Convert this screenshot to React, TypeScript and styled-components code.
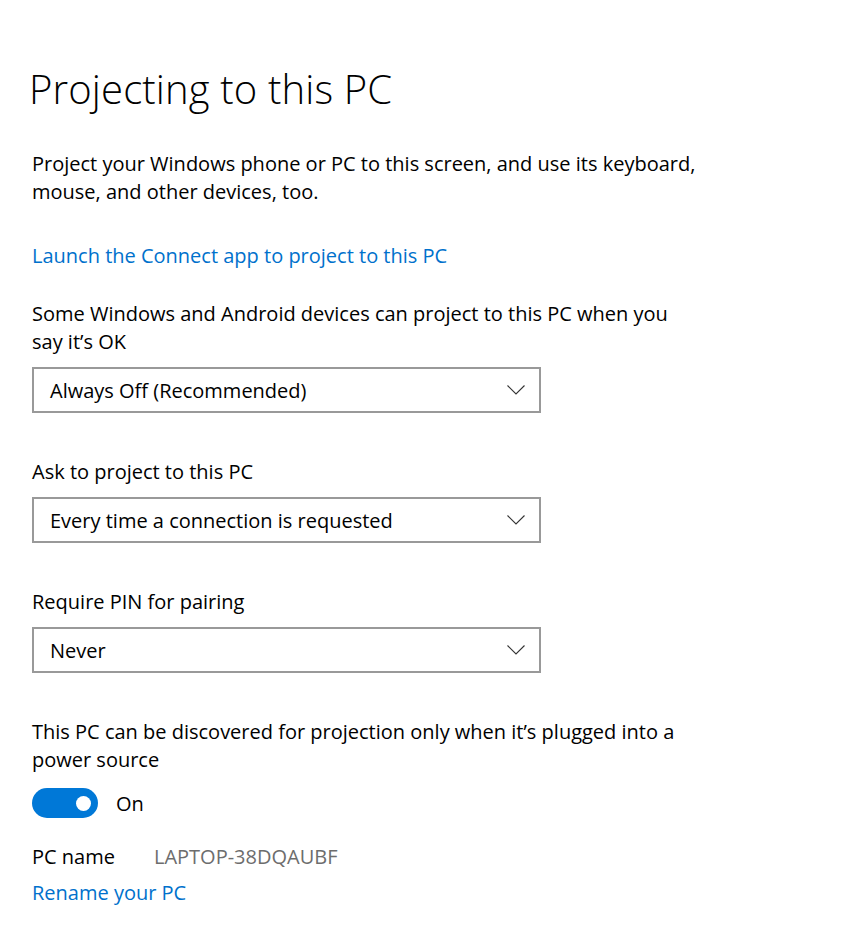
import React from "react";
import styled, { createGlobalStyle } from "styled-components";

const GlobalStyle = createGlobalStyle`
  html, body {
    margin: 0;
    padding: 0;
    background: #ffffff;
  }
  body {
    font-family: "Open Sans", "Noto Sans", "Liberation Sans", sans-serif;
    color: #000000;
  }
`;

const Page = styled.div`
  width: 850px;
  min-height: 930px;
  box-sizing: border-box;
  padding: 61px 0 0 32px;
  display: flex;
  flex-direction: column;
`;

const Title = styled.h1`
  margin: 0 0 0 -3px;
  font-size: 40px;
  font-weight: 300;
  line-height: 56px;
  letter-spacing: 0.15px;
`;

const Text = styled.p<{ $top: number }>`
  margin: ${(p) => p.$top}px 0 0 0;
  font-size: 20px;
  line-height: 28px;
`;

const Link = styled.a<{ $top: number }>`
  display: block;
  margin-top: ${(p) => p.$top}px;
  font-size: 20px;
  line-height: 28px;
  color: #0071cc;
  text-decoration: none;
  cursor: pointer;
`;

const Select = styled.div`
  margin-top: 11px;
  width: 509px;
  height: 46px;
  box-sizing: border-box;
  border: 2px solid #999999;
  display: flex;
  align-items: center;
  justify-content: space-between;
  padding: 0 14px 0 16px;
  font-size: 20px;
`;

const Chevron = () => (
  <svg width="18" height="10" viewBox="0 0 18 10">
    <path d="M0.5 0.5 L9 9 L17.5 0.5" fill="none" stroke="#333333" strokeWidth="1.1" />
  </svg>
);

const ToggleRow = styled.div`
  margin-top: 14px;
  display: flex;
  align-items: center;
  gap: 18px;
  font-size: 20px;
`;

const Toggle = styled.div<{ $on: boolean }>`
  width: 66px;
  height: 30px;
  box-sizing: border-box;
  border-radius: 15px;
  background: ${(p) => (p.$on ? "#0078d7" : "#ffffff")};
  display: flex;
  align-items: center;
  justify-content: ${(p) => (p.$on ? "flex-end" : "flex-start")};
  padding: 0 7px;

  &::after {
    content: "";
    width: 15px;
    height: 15px;
    border-radius: 50%;
    background: #ffffff;
  }
`;

const InfoRow = styled.div`
  margin-top: 25px;
  display: flex;
  gap: 39px;
  font-size: 20px;
  line-height: 28px;
`;

const InfoValue = styled.span`
  color: #6d6d6d;
`;

const App = () => {
  return (
    <>
      <GlobalStyle />
      <Page>
        <Title>Projecting to this PC</Title>
        <Text $top={33}>
          Project your Windows phone or PC to this screen, and use its keyboard,
          <br />
          mouse, and other devices, too.
        </Text>
        <Link $top={36}>Launch the Connect app to project to this PC</Link>
        <Text $top={30}>
          Some Windows and Android devices can project to this PC when you
          <br />
          say it’s OK
        </Text>
        <Select>
          <span>Always Off (Recommended)</span>
          <Chevron />
        </Select>
        <Text $top={45}>Ask to project to this PC</Text>
        <Select>
          <span>Every time a connection is requested</span>
          <Chevron />
        </Select>
        <Text $top={45}>Require PIN for pairing</Text>
        <Select>
          <span>Never</span>
          <Chevron />
        </Select>
        <Text $top={45}>
          This PC can be discovered for projection only when it’s plugged into a
          <br />
          power source
        </Text>
        <ToggleRow>
          <Toggle $on />
          <span>On</span>
        </ToggleRow>
        <InfoRow>
          <span>PC name</span>
          <InfoValue>LAPTOP-38DQAUBF</InfoValue>
        </InfoRow>
        <Link $top={8}>Rename your PC</Link>
      </Page>
    </>
  );
};

export default App;
